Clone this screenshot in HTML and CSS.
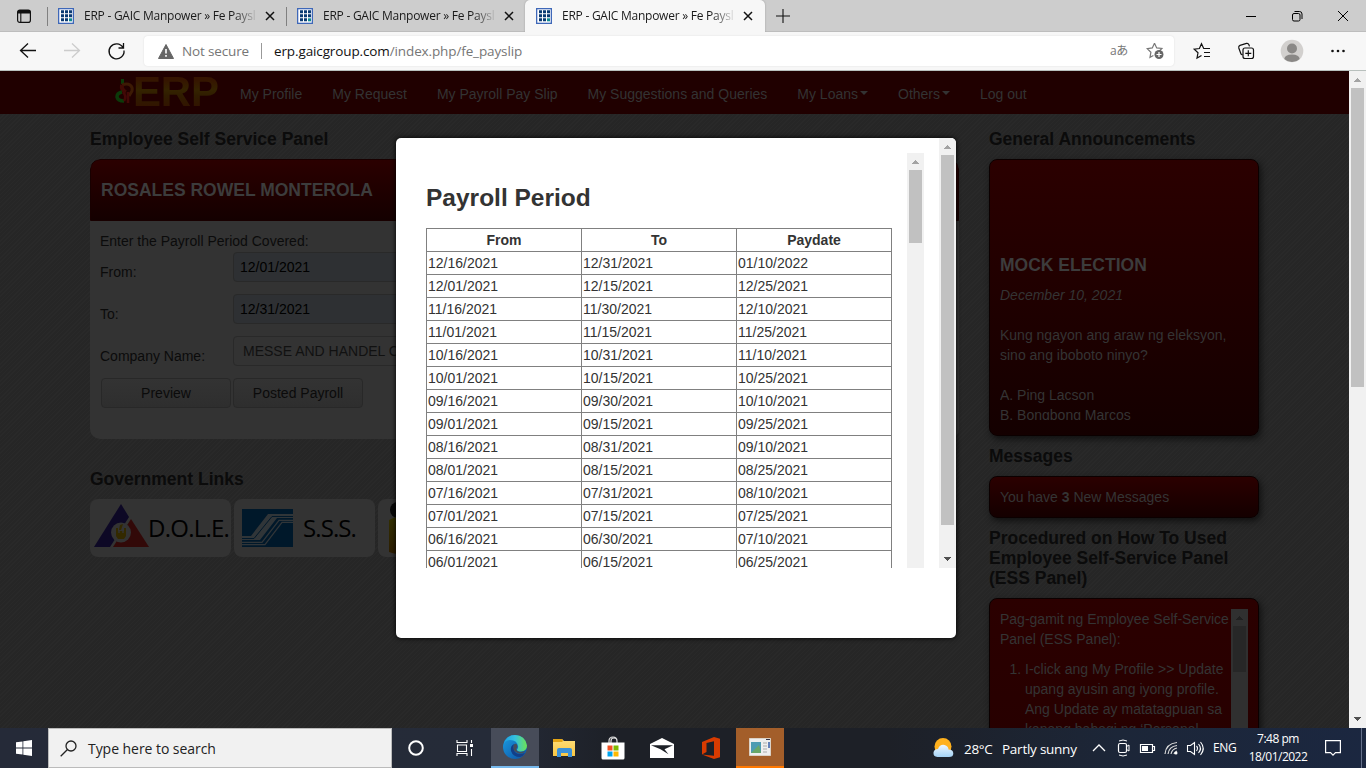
FILE: index.html
```html
<!DOCTYPE html>
<html lang="en">
<head>
<meta charset="utf-8">
<title>ERP - GAIC Manpower » Fe Payslip</title>
<link rel="stylesheet" href="styles.css">
</head>
<body>
<svg width="0" height="0" class="defs">
  <defs>
    <linearGradient id="edgeTop" x1="0" y1="0" x2="1" y2="0"><stop offset="0" stop-color="#1b9de2"/><stop offset=".5" stop-color="#35c1e0"/><stop offset="1" stop-color="#6de352"/></linearGradient>
    <linearGradient id="edgeLow" x1="0" y1="0" x2="1" y2="1"><stop offset="0" stop-color="#1b9de2"/><stop offset="1" stop-color="#0c4fa0"/></linearGradient>
    <linearGradient id="cloud" x1="0" y1="0" x2="0" y2="1"><stop offset="0" stop-color="#eef7fe"/><stop offset="1" stop-color="#a3d2f5"/></linearGradient>
    <linearGradient id="folder" x1="0" y1="0" x2="0" y2="1"><stop offset="0" stop-color="#ffdf7a"/><stop offset="1" stop-color="#f9c642"/></linearGradient>
    <linearGradient id="figure" x1="0" y1="0" x2="0" y2="1"><stop offset="0" stop-color="#333000"/><stop offset="1" stop-color="#2c1c00"/></linearGradient>
    <symbol id="favicon" viewBox="0 0 16 16"><path fill="#3f68b8" d="M0 0h16v16H0z"/><path fill="#fff" d="M1.3 1.3h13.4v13.4H1.3z"/><path fill="#0a3a72" d="M3 2.3h3v3H3zM7 2.3h3v3H7zM11 2.3h3v3h-3zM3 6.3h3v3H3zM7 6.3h3v3H7zM11 6.3h3v3h-3zM3 10.3h3v3H3zM7 10.3h3v3H7z"/><path fill="#108a90" d="M11 10.3h3v3h-3z"/></symbol>
    <symbol id="close" viewBox="0 0 10 10"><path d="M1 1l8 8M9 1l-8 8" stroke="#111" stroke-width="1.5"/></symbol>
    <symbol id="up" viewBox="0 0 17 17"><path fill="currentColor" d="M8 7h1v1h1v1h1v1h1v1H5v-1h1V9h1V8h1z"/></symbol>
    <symbol id="down" viewBox="0 0 17 17"><path fill="currentColor" d="M5 6h7v1h-1v1h-1v1H9v1H8V9H7V8H6V7H5z"/></symbol>
  </defs>
</svg>

<div class="window">
  <div class="tabstrip">
    <div class="tab-actions"><svg width="16" height="16" viewBox="0 0 16 16"><rect x="1.6" y="2.1" width="12.8" height="12.3" rx="2.2" fill="none" stroke="#111" stroke-width="1.2"/><path d="M1.5 5V4q0-2 2-2h9q2 0 2 2v1.5h-13z" fill="#111"/><path d="M4.8 5v9" stroke="#111" stroke-width="1.1"/></svg></div>
    <div class="tab"><svg class="fav"><use href="#favicon"/></svg><span class="tab-title">ERP - GAIC Manpower » Fe Paysl</span><svg class="x"><use href="#close"/></svg></div>
    <div class="tab"><svg class="fav"><use href="#favicon"/></svg><span class="tab-title">ERP - GAIC Manpower » Fe Paysl</span><svg class="x"><use href="#close"/></svg></div>
    <div class="tab active"><svg class="fav"><use href="#favicon"/></svg><span class="tab-title">ERP - GAIC Manpower » Fe Paysl</span><svg class="x"><use href="#close"/></svg></div>
    <svg class="plus" width="14" height="14" viewBox="0 0 14 14"><path d="M7 0v14M0 7h14" stroke="#111" stroke-width="1.1"/></svg>
    <div class="controls">
      <svg viewBox="0 0 46 32"><path d="M18 16.5h10" stroke="#000"/></svg>
      <svg viewBox="0 0 46 32"><rect x="18.5" y="13.5" width="7.5" height="7.5" rx="1.5" fill="none" stroke="#000"/><path d="M20.5 11.5h5q2.500 0 2.500 2.500v5" fill="none" stroke="#000"/></svg>
      <svg viewBox="0 0 46 32"><path d="M18 11l10 10M28 11l-10 10" stroke="#000"/></svg>
    </div>
  </div>

  <div class="toolbar">
    <div class="nav-buttons">
      <svg viewBox="0 0 46 40"><path d="M36 19.500H21M28 12.500l-7.500 7 7.500 7" fill="none" stroke="#111" stroke-width="1.3"/></svg>
      <svg viewBox="0 0 46 40"><path d="M20 19.500h15M28 12.500l7.500 7-7.500 7" fill="none" stroke="#ccc" stroke-width="1.300"/></svg>
      <svg viewBox="0 0 46 40"><path d="M35 16.500a7.500 7.500 0 1 0 1 3M35.500 12v5h-5" fill="none" stroke="#111" stroke-width="1.300"/></svg>
    </div>
    <div class="address">
      <svg width="16" height="15" viewBox="0 0 16 15"><path d="M8 .5 15.500 14.500H.5z" fill="#666" stroke="#666" stroke-linejoin="round"/><path d="M8 5v4.500M8 11v1.700" stroke="#fff" stroke-width="1.600"/></svg>
      <span class="insecure">Not secure</span>
      <span class="bar"></span>
      <span class="url"><b>erp.gaicgroup.com</b>/index.php/fe_payslip</span>
      <span class="lang">aあ</span>
      <svg class="star" width="19" height="18" viewBox="0 0 19 18"><path d="M8.500 1.200l2.200 4.700 5.200.6-3 3M8.500 1.200 6.300 5.900l-5.100.7 3.700 3.600-.9 5.100 3.400-1.800" fill="none" stroke="#777" stroke-width="1.200"/><circle cx="13" cy="12.500" r="4.500" fill="#666"/><path d="M13 10v5M10.500 12.500h5" stroke="#fff" stroke-width="1.200"/></svg>
    </div>
    <div class="tools">
      <svg viewBox="0 0 45 40"><path d="M30 17.500h-6.300l-2.200-4.700-2.100 4.700-5.200.7 3.800 3.600-1 5.200 4.500-2.500M24 21.500h6M24 25.500h6" fill="none" stroke="#111" stroke-width="1.200"/></svg>
      <svg viewBox="0 0 45 40"><rect x="18" y="17" width="10.500" height="10.500" rx="2" fill="none" stroke="#111" stroke-width="1.200"/><path d="M23.300 19.300v6M20.300 22.300h6M17.500 24l-1.500-1-2.200-6q-.5-2 1.200-2.600l6.500-2q1.700-.3 2.300 1.100l.7 1.900" fill="none" stroke="#111" stroke-width="1.200"/></svg>
      <svg viewBox="0 0 45 40"><circle cx="22" cy="20" r="11.300" fill="#d2d0ce"/><circle cx="22" cy="17.500" r="5" fill="#8a8886"/><path d="M14.300 28q.5-4.500 7.700-4.500t7.700 4.500a11.200 11.200 0 0 1-15.400 0z" fill="#8a8886"/></svg>
      <svg viewBox="0 0 45 40"><g fill="#111"><circle cx="17.500" cy="20" r="1.300"/><circle cx="23" cy="20" r="1.300"/><circle cx="28.500" cy="20" r="1.300"/></g></svg>
    </div>
  </div>

  <div class="viewport">
    <div class="page">
      <nav class="navbar">
        <div class="brand">
          <svg width="20" height="30" viewBox="0 0 20 30"><path d="M7.500 2v5" stroke="#0c3a0a" stroke-width="3"/><path d="M7 8q5-2 8 0 3 2 2 6l-3 5" fill="none" stroke="#3c1a04" stroke-width="3"/><path d="M7 8q-1 5 4 7" fill="none" stroke="#400a04" stroke-width="4"/><path d="M7 15q-5 1-5 5 1 4 7 4" fill="none" stroke="#0c3a0a" stroke-width="3.500"/><path d="M8 15q4 4 1 9M13 15v11" fill="none" stroke="#430806" stroke-width="2.500"/></svg>
          <span>ERP</span>
        </div>
        <a>My Profile</a><a>My Request</a><a>My Payroll Pay Slip</a><a>My Suggestions and Queries</a><a>My Loans<i class="caret"></i></a><a>Others<i class="caret"></i></a><a>Log out</a>
      </nav>
      <div class="columns">
        <main>
          <h4>Employee Self Service Panel</h4>
          <section class="panel">
            <header>ROSALES ROWEL MONTEROLA</header>
            <div class="form">
              <p>Enter the Payroll Period Covered:</p>
              <div class="row"><label>From:</label><div class="input auto">12/01/2021</div></div>
              <div class="row"><label>To:</label><div class="input auto">12/31/2021</div></div>
              <div class="row"><label>Company Name:</label><div class="input select">MESSE AND HANDEL C</div></div>
              <div class="buttons"><span>Preview</span><span>Posted Payroll</span></div>
            </div>
          </section>
          <h4>Government Links</h4>
          <div class="links">
            <div class="link dole">
              <svg width="56" height="44" viewBox="0 0 56 44"><path d="M27 0 0 43h16l19-30z" fill="#0d0825"/><path d="M37 15 19 43h36z" fill="#320908"/><circle cx="27" cy="28.500" r="10" fill="#333"/><path d="M23 24v5q0 4 4 4t4-4v-5" fill="none" stroke="#332900" stroke-width="2"/><path d="M22 27h10v5l-2 3h-6l-2-3zM25 26l1-5 3-1-2 6z" fill="#332900"/><path d="M25 27v2M29 27v2" stroke="#333" stroke-width="1.500"/></svg>
              <span>D.O.L.E.</span>
            </div>
            <div class="link sss">
              <svg width="51" height="38" viewBox="0 0 51 38"><path d="M0 0h51v38H0z" fill="#00182a"/><path d="M0 31v-4h9L26 5h25v4H35L18 31z" fill="#303538"/><path d="M0 33.300h20L37 11.300h14M0 35.600h23L40 13.300h11" fill="none" stroke="#303538" stroke-width="1.300"/><path d="M0 29.500h12L30 7.500h21" fill="none" stroke="#00182a" stroke-width="1"/></svg>
              <span>S.S.S.</span>
            </div>
            <div class="link person"><svg width="40" height="52" viewBox="0 0 40 52"><circle cx="9" cy="8" r="8" fill="#080808"/><path d="M0 18q10-6 20 0v32q-10 4-20 0z" fill="url(#figure)"/></svg></div>
          </div>
        </main>
        <aside>
          <h4>General Announcements</h4>
          <section class="box announce"><div class="marquee"><h4>MOCK ELECTION</h4><em>December 10, 2021</em><p>Kung ngayon ang araw ng eleksyon, sino ang iboboto ninyo?</p><p>A. Ping Lacson<br>B. Bongbong Marcos</p></div></section>
          <h4>Messages</h4>
          <section class="box messages">You have <b>3</b> New Messages</section>
          <h4>Procedured on How To Used Employee Self-Service Panel (ESS Panel)</h4>
          <section class="box guide">
            <div class="guide-text">Pag-gamit ng Employee Self-Service Panel (ESS Panel):<ol><li>I-click ang My Profile &gt;&gt; Update upang ayusin ang iyong profile. Ang Update ay matatagpuan sa kanang bahagi ng ‘Personal</li></ol></div>
            <div class="scroll dim"><svg><use href="#up"/></svg><div class="thumb"></div></div>
          </section>
        </aside>
      </div>
    </div>
    <div class="scroll main-scroll"><svg><use href="#up"/></svg><div class="thumb"></div><svg class="end"><use href="#down"/></svg></div>

    <div class="modal">
      <div class="modal-body">
        <div class="content">
          <h3>Payroll Period</h3>
          <table>
            <tr><th>From</th><th>To</th><th>Paydate</th></tr>
            <tr><td>12/16/2021</td><td>12/31/2021</td><td>01/10/2022</td></tr>
            <tr><td>12/01/2021</td><td>12/15/2021</td><td>12/25/2021</td></tr>
            <tr><td>11/16/2021</td><td>11/30/2021</td><td>12/10/2021</td></tr>
            <tr><td>11/01/2021</td><td>11/15/2021</td><td>11/25/2021</td></tr>
            <tr><td>10/16/2021</td><td>10/31/2021</td><td>11/10/2021</td></tr>
            <tr><td>10/01/2021</td><td>10/15/2021</td><td>10/25/2021</td></tr>
            <tr><td>09/16/2021</td><td>09/30/2021</td><td>10/10/2021</td></tr>
            <tr><td>09/01/2021</td><td>09/15/2021</td><td>09/25/2021</td></tr>
            <tr><td>08/16/2021</td><td>08/31/2021</td><td>09/10/2021</td></tr>
            <tr><td>08/01/2021</td><td>08/15/2021</td><td>08/25/2021</td></tr>
            <tr><td>07/16/2021</td><td>07/31/2021</td><td>08/10/2021</td></tr>
            <tr><td>07/01/2021</td><td>07/15/2021</td><td>07/25/2021</td></tr>
            <tr><td>06/16/2021</td><td>06/30/2021</td><td>07/10/2021</td></tr>
            <tr><td>06/01/2021</td><td>06/15/2021</td><td>06/25/2021</td></tr>
          </table>
        </div>
        <div class="scroll inner-scroll"><svg><use href="#up"/></svg><div class="thumb"></div></div>
        <div class="scroll outer-scroll"><svg><use href="#up"/></svg><div class="thumb"></div><svg class="end"><use href="#down"/></svg></div>
      </div>
    </div>
  </div>

  <div class="taskbar">
    <div class="start"><svg width="16" height="16" viewBox="0 0 16 16"><path d="M0 2.300 6.500 1.400V7.600H0zM7.300 1.200 16 0v7.600H7.300zM0 8.400h6.500v6.200L0 13.700zM7.300 8.400H16V16l-8.700-1.200z" fill="#fff"/></svg></div>
    <div class="search"><svg width="17" height="17" viewBox="0 0 17 17"><circle cx="11" cy="6" r="5" fill="none" stroke="#222" stroke-width="1.300"/><path d="M7.500 9.500.7 16.300" stroke="#222" stroke-width="1.300"/></svg><span>Type here to search</span></div>
    <div class="apps">
      <div><svg width="16" height="16" viewBox="0 0 16 16"><circle cx="8" cy="8" r="6.800" fill="none" stroke="#fff" stroke-width="2"/></svg></div>
      <div><svg width="17" height="16" viewBox="0 0 17 16"><path d="M1 0v2.500h10V0M1 16v-2.500h10V16M1.500 5h9v6.500h-9zM15.500 0v3M15.500 9v7" fill="none" stroke="#fff" stroke-width="1.100"/><path d="M14 4h3v3h-3z" fill="#fff"/></svg></div>
      <div class="edge"><svg width="24" height="24" viewBox="0 0 24 24"><circle cx="12" cy="12" r="12" fill="url(#edgeLow)"/><path d="M0 12Q1 5 7 5q7 0 8 6 .5 2-1 3.500 0 2 4 2 6-.5 6-6Q22 0 12 0 2 0 0 12z" fill="url(#edgeTop)"/><path d="M11 9q-4 2-3 7 2 6 9 6 3-.5 5-4-9 3-11-3-1-3 0-6z" fill="#123f88"/><path d="M11 9.500q1-1.500 3 0 .8 2-.5 4-.8 1 .8 2.400 3 2 8 0-2 3-6 2.500-5-1-5.800-4.400-.3-2 .5-4.500z" fill="#474c59"/></svg></div>
      <div class="wide"><svg width="22" height="20" viewBox="0 0 22 20"><path d="M0 1h9l2 2h11v15H0z" fill="url(#folder)"/><path d="M0 1h9l1 2-1 1H0z" fill="#e4a414"/><path d="M4 19v-7q0-2 2-2h11q2 0 2 2v7h-4v-4H8v4z" fill="#3b91d8"/></svg></div>
      <div class="wide"><svg width="24" height="24" viewBox="0 0 24 24"><path d="M8 7V5q0-4 4-4t4 4v2M10 7V5q0-3 3-3t3 3" fill="none" stroke="#ddd" stroke-width="1.200"/><path d="M.5 6.500h23V22q0 1.500-1.500 1.500H2Q.5 23.500.5 22z" fill="#fff"/><path d="M6.500 9.500h5v5h-5z" fill="#f25022"/><path d="M12.500 9.500h5v5h-5z" fill="#7fba00"/><path d="M6.500 15.500h5v5h-5z" fill="#00a4ef"/><path d="M12.500 15.500h5v5h-5z" fill="#ffb900"/></svg></div>
      <div class="wide"><svg width="24" height="20" viewBox="0 0 24 20"><path d="M0 6 12 0l12 6v14H0z" fill="#fff"/><path d="M1 7.200h22l-8.500 4 4 5-8-5z" fill="#1d2027"/></svg></div>
      <div class="wide"><svg width="20" height="22" viewBox="0 0 20 22"><path d="M1 5 13 0l6 1.800v18.400L13 22 1 17.500l12 1.300V4.200L5.500 6v9L1 17.500z" fill="#d83b01"/></svg></div>
      <div class="remote"><svg width="22" height="18" viewBox="0 0 22 18"><path d="M0 0h22v18H0z" fill="#eee" stroke="#c8b49d"/><path d="M2 4h10v11H2z" fill="#4d9bb2"/><path d="M2 15l8-8 2 8z" fill="#68a768"/><path d="M14 5h4M14 8h4M14 11h4M14 14h4" stroke="#aaa"/><path d="M17 1.500h4" stroke="#334"/><path d="M20 4v6" stroke="#355da8" stroke-width="1.500"/></svg></div>
    </div>
    <div class="tray">
      <svg class="weather" width="21" height="20" viewBox="0 0 21 20"><circle cx="10" cy="8.500" r="8.500" fill="#ffb11d"/><path d="M4.500 19Q0 18.500.5 14.500 1 11 5 11q2-5 6.500-4 4 1 4 4.500 4.800.2 4.800 4 0 3.500-4.300 3.500z" fill="url(#cloud)"/></svg>
      <span class="temp">28°C</span><span class="sky">Partly sunny</span>
      <svg class="ic" viewBox="0 0 24 40"><path d="M6 23l6-6 6 6" fill="none" stroke="#fff" stroke-width="1.300"/></svg>
      <svg class="ic" viewBox="0 0 24 40"><rect x="7.500" y="15.500" width="8" height="9" rx="1.500" fill="none" stroke="#fff" stroke-width="1.200"/><path d="M15.500 18.500 18 17v6l-2.500-1.500M8 13q4-2 8 0M8 27q4 2 8 0" fill="none" stroke="#fff"/></svg>
      <svg class="ic" viewBox="0 0 24 40"><path d="M5.500 16.500h12v8h-12zM18 18.500h1.500v4H18" fill="none" stroke="#fff" stroke-width="1.200"/><path d="M7 18h6v5H7z" fill="#fff"/></svg>
      <svg class="ic" viewBox="0 0 24 40"><path d="M6 26Q7 15.500 18 14.500M9 26q1-7.500 9-8.500M12 26q1-5 6-6M15 26q.5-2 3-3" fill="none" stroke="#ddd" stroke-width="1.200"/><circle cx="17" cy="25" r="1.500" fill="#fff"/></svg>
      <svg class="ic" viewBox="0 0 24 40"><path d="M4.500 17.500h3l4-3v12l-4-3h-3zM13.500 18q2 2 0 5M15.500 16q4 4.500 0 9M17.500 14q5.500 6.500 0 13" fill="none" stroke="#fff" stroke-width="1.100"/></svg>
      <span class="eng">ENG</span>
      <div class="clock"><span>7:48 pm</span><span>18/01/2022</span></div>
      <svg class="note" width="16" height="16" viewBox="0 0 16 16"><path d="M.6.600h14.800v12H10.500l-2.500 2.500-2.500-2.500H.6z" fill="none" stroke="#fff" stroke-width="1.200"/></svg>
    </div>
  </div>
</div>
</body>
</html>
```
FILE: styles.css
```css
* { box-sizing: border-box; }
body { margin: 0; overflow: hidden; font: 14px/20px "Liberation Sans", Arial, sans-serif; }
h3, h4, p { margin: 0; }
svg { flex: none; display: block; }
.defs { position: absolute; }
.window { display: flex; flex-direction: column; width: 1366px; height: 768px; overflow: hidden; }

/* Browser tabs */
.tabstrip { display: flex; height: 32px; background: #cdcdcd; border-bottom: 1px solid #bdbdbd; font: 12px/16px "Open Sans", sans-serif; color: #1a1a1a; }
.tab-actions { width: 47px; padding: 8px 0 0 16px; }
.tab { width: 239px; height: 32px; padding: 0 10px; display: flex; align-items: center; position: relative; }
.tab:not(.active)::before { content: ""; position: absolute; left: 0; top: 7px; width: 1px; height: 19px; background: #808080; }
.tab.active { width: 240px; background: #f7f7f7; border-radius: 5px 5px 0 0; box-shadow: 0 0 2px #999; clip-path: inset(0 -3px 0 -3px); }
.fav { width: 16px; height: 16px; margin: 0 10px 0 1px; }
.tab-title { width: 174px; white-space: nowrap; letter-spacing: -.25px; -webkit-mask-image: linear-gradient(90deg, #000 150px, transparent 174px); }
.x { width: 10px; height: 10px; margin-left: 7px; }
.plus { margin: 9px 0 0 11px; }
.controls { display: flex; margin-left: auto; }
.controls svg { width: 46px; height: 32px; }

/* Address row */
.toolbar { display: flex; align-items: center; height: 39px; background: #f7f7f7; border-bottom: 1px solid #b8c0bd; }
.nav-buttons { display: flex; width: 144px; }
.nav-buttons svg { width: 46px; height: 40px; margin-right: -2px; }
.address { width: 1030px; height: 30px; border-radius: 4px; background: #fff; box-shadow: 0 0 2px #ddd; display: flex; align-items: center; padding-left: 14px; font: 13.500px/20px "Open Sans", sans-serif; color: #767676; }
.insecure { margin-left: 8px; width: 67px; white-space: nowrap; letter-spacing: -.15px; }
.bar { width: 1px; height: 16px; background: #999; margin: 0 12px; }
.url { letter-spacing: -.12px; }
.url b { font-weight: 400; color: #111; }
.lang { margin-left: auto; margin-right: 18px; font: 12px/20px "Open Sans", "Noto Sans CJK JP", sans-serif; letter-spacing: -.3px; white-space: nowrap; }
.star { margin-right: 9px; }
.tools { display: flex; margin-left: 6px; }
.tools svg { width: 45px; height: 40px; }

/* Dimmed page */
.viewport { position: relative; display: flex; height: 657px; overflow: hidden; }
.page { width: 1349px; height: 657px; overflow: hidden; background: repeating-linear-gradient(135deg, #292929 0 1px, #262626 1px 3px); color: #0b0b0b; }
.navbar { height: 43px; background: #200000; display: flex; align-items: center; padding-left: 115px; color: #333; gap: 30px; white-space: nowrap; padding-top: 3px; }
.brand { display: flex; align-items: center; width: 104px; margin: -4px -9px 0 0; }
.brand span { width: 88px; font: bold 42px/36px "Liberation Sans", sans-serif; letter-spacing: -.2px; margin-left: -2px; background: linear-gradient(#351400 15%, #342300 45%, #301c00 60%, #321200); background-clip: text; -webkit-background-clip: text; color: transparent; }
.caret { display: inline-block; border: 4px solid transparent; border-top-color: #333; border-bottom: 0; margin-left: 2px; vertical-align: 4px; }
.columns { display: flex; gap: 30px; padding: 5px 0 0 90px; }
main { width: 869px; }
aside { width: 270px; }
h4 { font-size: 17.500px; line-height: 20px; margin: 10px 0; }
.panel { height: 280px; border-radius: 10px; background: #333; overflow: hidden; margin-bottom: 30px; }
.panel header { height: 62px; border: 1px solid #180000; border-radius: 10px 10px 0 0; background: linear-gradient(#2b0000, #140000); font-weight: bold; font-size: 17.500px; line-height: 60px; padding-left: 10px; color: #3c3c3c; }
.form { padding: 10px; }
.form p { height: 20px; }
.row { display: flex; height: 42px; padding-top: 1px; }
.row label { width: 133px; padding-top: 10px; }
.input { width: 207px; height: 30px; border: 1px solid #292929; border-radius: 4px; padding: 4px 6px; line-height: 20px; color: #000; white-space: nowrap; overflow: hidden; }
.auto { background: #2e3033; }
.select { padding-left: 9px; color: #111; }
.buttons { display: flex; gap: 2px; padding: 1px 0 0 1px; }
.buttons span { width: 130px; height: 30px; border: 1px solid #282828; border-radius: 4px; background: linear-gradient(#333, #2e2e2e); text-align: center; line-height: 28px; }
.links { display: flex; gap: 3px; }
.link { width: 141px; height: 58px; border-radius: 8px; background: #333; display: flex; align-items: center; color: #000; font: 24px/30px "Open Sans", sans-serif; white-space: nowrap; }
.dole { padding-left: 4px; }
.dole svg { margin-top: -5px; margin-right: -2px; }
.dole span { letter-spacing: -.75px; }
.sss { padding-left: 8px; }
.sss span { margin-left: 10px; letter-spacing: -.9px; }
.person { padding-left: 11px; }
.box { border: 1px solid #0b0000; border-radius: 8px; color: #343434; background: linear-gradient(#2b0000, #140000); box-shadow: 2px 3px 6px #111; padding: 10px; }
.announce { height: 277px; padding-top: 95px; }
.marquee { height: 165px; overflow: hidden; }
.marquee h4 { margin: 0 0 10px; color: #3c3c3c; }
.marquee em { display: block; }
.marquee p { margin-top: 20px; width: 245px; }
.messages { height: 42px; }
.guide { height: 300px; display: flex; background: linear-gradient(#2b0000, #220000); }
.guide-text { width: 231px; }
.guide ol { margin: 10px 0; padding-left: 25px; width: 231px; }

/* Scrollbars */
.scroll { width: 17px; flex: none; background: #f1f1f1; color: #a3a3a3; display: flex; flex-direction: column; align-items: center; }
.scroll svg { width: 17px; height: 17px; }
.scroll .end { margin-top: auto; color: #505050; }
.thumb { width: 13px; background: #c1c1c1; }
.main-scroll { height: 657px; }
.main-scroll .thumb { height: 299px; }
.dim { height: 260px; background: #303030; color: #202020; }
.dim .thumb { height: 46px; background: #272727; }

/* Payroll dialog */
.modal { position: absolute; left: 396px; top: 67px; width: 560px; height: 500px; background: #fff; border-radius: 5px; box-shadow: 0 0 5px #000; color: #333; overflow: hidden; }
.modal-body { display: flex; height: 430px; overflow: hidden; }
.content { width: 511px; padding: 45px 15px 0 30px; }
.content h3 { font-size: 24.500px; line-height: 30px; margin-bottom: 15px; }
table { width: 466px; border-collapse: collapse; table-layout: fixed; }
th, td { border: 1px solid #808080; height: 23px; padding: 1px; line-height: 20px; text-align: left; }
th { text-align: center; }
.inner-scroll { height: 430px; margin-top: 15px; }
.inner-scroll .thumb { height: 73px; }
.outer-scroll { height: 430px; margin-left: 15px; }
.outer-scroll .thumb { height: 370px; }

/* Taskbar */
.taskbar { display: flex; height: 40px; background: linear-gradient(90deg, #252a38, #252b38 36%, #1d2027 45%, #1d2027 65%, #1c2638 82%, #1b2740); color: #fff; font: 14px/20px "Open Sans", sans-serif; }
.start { width: 48px; padding: 12px 16px; }
.search { width: 344px; border: 1px solid #bbb; background: #f1f1f1; display: flex; align-items: center; padding-left: 11px; gap: 11px; color: #222; letter-spacing: -.05px; }
.search span { padding-top: 1px; }
.apps { display: flex; }
.apps div { width: 48px; display: flex; align-items: center; justify-content: center; }
.apps .wide { width: 49.250px; }
.apps .edge { margin-left: 3px; background: #474c59; border-bottom: 2px solid #76b9ed; }
.apps .remote { background: #a35e2a; border-bottom: 2px solid #ff7800; }
.tray { display: flex; align-items: center; margin-left: auto; width: 433px; white-space: nowrap; }
.temp { margin-left: 10px; width: 38px; padding-top: 1px; font-size: 13.500px; letter-spacing: -.3px; }
.sky { width: 85px; padding-top: 1px; font-size: 13.500px; letter-spacing: -.25px; }
.ic { width: 24px; height: 40px; }
.eng { margin-left: 6px; width: 30px; font-size: 12px; letter-spacing: -.3px; }
.clock { width: 70px; display: flex; flex-direction: column; text-align: center; font-size: 12px; line-height: 18px; letter-spacing: -.5px; }
.note { margin-left: 12px; }
.tray::after { content: ""; width: 1px; height: 40px; margin-left: 20px; background: #65708a; }
```
